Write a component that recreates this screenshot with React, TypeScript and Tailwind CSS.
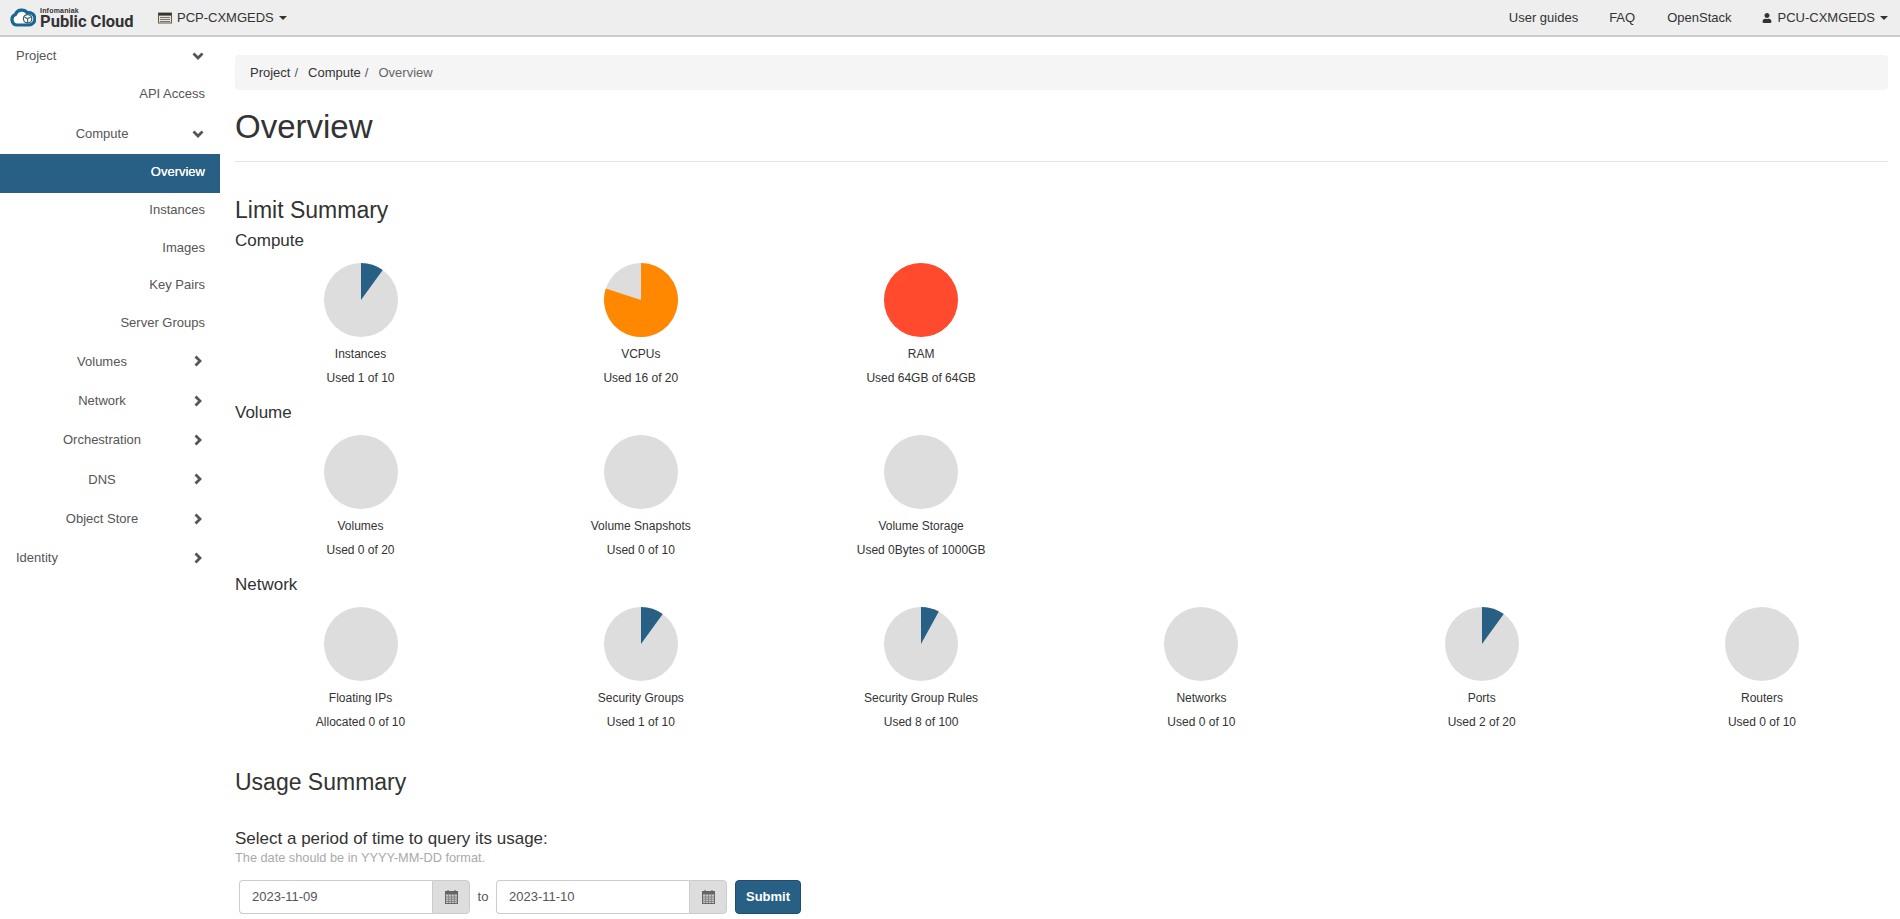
import React from "react";
import { FaUser } from "react-icons/fa";

const BLUE = "#285f85";

function Chevron({ dir }: { dir: "down" | "right" }) {
  return (
    <svg width="12" height="12" viewBox="0 0 12 12" className="block">
      <path
        d={dir === "down" ? "M1.5 3.5 L6 8 L10.5 3.5" : "M3.5 1.5 L8 6 L3.5 10.5"}
        fill="none"
        stroke="#555555"
        strokeWidth="2.8"
      />
    </svg>
  );
}

function Caret() {
  return (
    <svg width="8" height="4" viewBox="0 0 8 4" className="block ml-[5px]">
      <path d="M0 0H8L4 4Z" fill="#333333" />
    </svg>
  );
}

function Pie({ pct, color }: { pct: number; color: string }) {
  const r = 37;
  const c = 37;
  let seg = null;
  if (pct >= 100) {
    seg = <circle cx={c} cy={c} r={r} fill={color} />;
  } else if (pct > 0) {
    const a = (pct / 100) * 2 * Math.PI;
    const x = c + r * Math.sin(a);
    const y = c - r * Math.cos(a);
    seg = <path d={`M${c} ${c} L${c} 0 A${r} ${r} 0 ${pct > 50 ? 1 : 0} 1 ${x} ${y} Z`} fill={color} />;
  }
  return (
    <svg width="74" height="74" viewBox="0 0 74 74" className="block">
      <circle cx={c} cy={c} r={r} fill="#dddddd" />
      {seg}
    </svg>
  );
}

function Chart({ label, used, pct, color = BLUE }: { label: string; used: string; pct: number; color?: string }) {
  return (
    <div className="w-[250px] mr-[30.3px] flex flex-col items-center text-[12px] text-[#333333] shrink-0">
      <Pie pct={pct} color={color} />
      <div className="mt-[8px] h-[18px] leading-[18px]">{label}</div>
      <div className="mt-[6px] h-[18px] leading-[18px]">{used}</div>
    </div>
  );
}

function Section({ title, children }: { title: string; children: React.ReactNode }) {
  return (
    <section className="h-[172px]">
      <h4 className="text-[17px] leading-[20px] h-[20px] text-[#333333]">{title}</h4>
      <div className="flex pt-[12px] pl-[0.5px]">{children}</div>
    </section>
  );
}

function TopRow({ label, dir, h }: { label: string; dir: "down" | "right"; h: string }) {
  return (
    <div className={`${h} flex items-center pl-[16px] pr-[16px] justify-between text-[13px] text-[#555555]`}>
      <span>{label}</span>
      <Chevron dir={dir} />
    </div>
  );
}

function MidRow({ label, dir, h = "h-[39.3px]" }: { label: string; dir: "down" | "right"; h?: string }) {
  return (
    <div className={`${h} flex items-center pr-[16px] text-[13px] text-[#555555]`}>
      <span className="w-[178px] pl-[26px] text-center">{label}</span>
      <span className="ml-auto"><Chevron dir={dir} /></span>
    </div>
  );
}

function Leaf({ label, active, h = "h-[37.7px]" }: { label: string; active?: boolean; h?: string }) {
  return (
    <div
      className={
        active
          ? "h-[39px] pb-[3px] -mb-[2px] flex items-center justify-end pr-[15px] text-[13px] text-white bg-[#285f85] [text-shadow:0_0_0.4px_white]"
          : `${h} flex items-center justify-end pr-[15px] text-[13px] text-[#555555]`
      }
    >
      {label}
    </div>
  );
}

function Logo() {
  return (
    <svg width="26" height="19" viewBox="0 0 26 19" className="block">
      <path
        d="M7 17 A5.4 5.4 0 0 1 5.4 6.6 A6.8 6.8 0 0 1 17.2 4.8 A6.2 6.2 0 1 1 19 17 Z"
        fill="#fff"
        stroke="#1b6794"
        strokeWidth="3.2"
      />
      <circle cx="17.6" cy="10.8" r="4.2" fill="#fff" stroke="#3f5f73" strokeWidth="1.3" />
      <path d="M17.6 10.8 L17.6 14.4 M17.6 10.8 L14.5 9 M17.6 10.8 L20.7 9" stroke="#3f5f73" strokeWidth="1.2" />
    </svg>
  );
}

function ProjIcon() {
  return (
    <svg width="14" height="12" viewBox="0 0 14 12" className="block">
      <rect x="0.5" y="1" width="13" height="10" fill="#e6e2da" stroke="#6b5a3f" />
      <rect x="0.5" y="1" width="13" height="2.6" fill="#333333" />
      <path d="M2 5.5H12M2 7.5H12M2 9.5H12" stroke="#777777" />
    </svg>
  );
}

function CalendarIcon() {
  return (
    <svg width="13" height="14" viewBox="0 0 13 14" className="block">
      <path d="M3 0.5V3M10 0.5V3" stroke="#555555" strokeWidth="2" />
      <rect x="0.5" y="1.5" width="12" height="12" fill="#c9c9c9" stroke="#666666" />
      <rect x="1" y="2" width="11" height="2.5" fill="#666666" />
      <path d="M1 7H12M1 9.2H12M1 11.4H12M3.7 4.5V13M6.5 4.5V13M9.3 4.5V13" stroke="#777777" strokeWidth="0.8" />
    </svg>
  );
}

function DateInput({ value }: { value: string }) {
  return (
    <div className="flex h-[34px] w-[231px] text-[13px]">
      <div className="flex-1 border border-[#cccccc] rounded-l-[4px] bg-white text-[#555555] pl-[12px] flex items-center border-r-0">
        {value}
      </div>
      <div className="w-[38px] bg-[#dddddd] border border-[#cccccc] rounded-r-[4px] flex items-center justify-center text-[#555555]">
        <CalendarIcon />
      </div>
    </div>
  );
}

export default function App() {
  return (
    <div className="h-[919px] overflow-hidden bg-white font-['Liberation_Sans',Arial,sans-serif] text-[#333333]">
      <header className="h-[35px] box-content bg-[#eeeeee] border-b-2 border-[#cccccc] flex items-center text-[13px] text-[#333333]">
        <div className="flex items-center pl-[10px] w-[158px]">
          <Logo />
          <div className="ml-[4px] flex flex-col">
            <span className="text-[7px] leading-[7px] font-bold text-[#333333] tracking-[0.2px]">Infomaniak</span>
            <span className="text-[16.5px] leading-[15px] font-bold text-[#333333] font-['Roboto',sans-serif]">Public Cloud</span>
          </div>
        </div>
        <div className="flex items-center">
          <ProjIcon />
          <span className="ml-[5px]">PCP-CXMGEDS</span>
          <Caret />
        </div>
        <nav className="ml-auto flex items-center pr-[12px]">
          <span>User guides</span>
          <span className="ml-[31px]">FAQ</span>
          <span className="ml-[32px]">OpenStack</span>
          <span className="ml-[31px] flex items-center">
            <FaUser size={10} className="mr-[5px]" />
            PCU-CXMGEDS
            <Caret />
          </span>
        </nav>
      </header>
      <div className="flex">
        <aside className="w-[220px] shrink-0">
          <TopRow label="Project" dir="down" h="h-[37px]" />
          <Leaf label="API Access" h="h-[39px]" />
          <MidRow label="Compute" dir="down" h="h-[41px]" />
          <Leaf label="Overview" active />
          <Leaf label="Instances" />
          <Leaf label="Images" />
          <Leaf label="Key Pairs" />
          <Leaf label="Server Groups" />
          <MidRow label="Volumes" dir="right" />
          <MidRow label="Network" dir="right" />
          <MidRow label="Orchestration" dir="right" />
          <MidRow label="DNS" dir="right" />
          <MidRow label="Object Store" dir="right" />
          <TopRow label="Identity" dir="right" h="h-[39.3px]" />
        </aside>
        <main className="flex-1 min-w-0 pl-[15px] pr-[12px] pt-[18px]">
          <div className="h-[35px] bg-[#f5f5f5] rounded-[4px] flex items-center pl-[15px] text-[13px]">
            <span className="text-[#333333]">Project</span>
            <span className="text-[#555555] ml-[4px] mr-[10px]">/</span>
            <span className="text-[#333333]">Compute</span>
            <span className="text-[#555555] ml-[4px] mr-[10px]">/</span>
            <span className="text-[#666666]">Overview</span>
          </div>
          <h1 className="text-[33px] leading-[40px] mt-[17px] text-[#333333]">Overview</h1>
          <div className="h-px bg-[#e5e5e5] mt-[14px]" />
          <h3 className="text-[23px] leading-[26px] mt-[35px] text-[#333333]">Limit Summary</h3>
          <div className="mt-[8px]">
            <Section title="Compute">
              <Chart label="Instances" used="Used 1 of 10" pct={10} />
              <Chart label="VCPUs" used="Used 16 of 20" pct={80} color="#ff8800" />
              <Chart label="RAM" used="Used 64GB of 64GB" pct={100} color="#ff4a2d" />
            </Section>
            <Section title="Volume">
              <Chart label="Volumes" used="Used 0 of 20" pct={0} />
              <Chart label="Volume Snapshots" used="Used 0 of 10" pct={0} />
              <Chart label="Volume Storage" used="Used 0Bytes of 1000GB" pct={0} />
            </Section>
            <Section title="Network">
              <Chart label="Floating IPs" used="Allocated 0 of 10" pct={0} />
              <Chart label="Security Groups" used="Used 1 of 10" pct={10} />
              <Chart label="Security Group Rules" used="Used 8 of 100" pct={8} />
              <Chart label="Networks" used="Used 0 of 10" pct={0} />
              <Chart label="Ports" used="Used 2 of 20" pct={10} />
              <Chart label="Routers" used="Used 0 of 10" pct={0} />
            </Section>
          </div>
          <h3 className="text-[23px] leading-[26px] mt-[22px] text-[#333333]">Usage Summary</h3>
          <div className="text-[17px] leading-[20px] mt-[34px] text-[#333333]">Select a period of time to query its usage:</div>
          <div className="text-[12.75px] leading-[14px] mt-[2px] text-[#aaaaaa]">The date should be in YYYY-MM-DD format.</div>
          <div className="flex items-start mt-[15px] pl-[4px]">
            <DateInput value="2023-11-09" />
            <span className="w-[26px] text-center text-[13px] leading-[34px] text-[#555555]">to</span>
            <DateInput value="2023-11-10" />
            <button className="ml-[8px] w-[66px] h-[34px] bg-[#285f85] border border-[#204d6b] rounded-[4px] text-white text-[13px] font-bold">
              Submit
            </button>
          </div>
        </main>
      </div>
    </div>
  );
}
